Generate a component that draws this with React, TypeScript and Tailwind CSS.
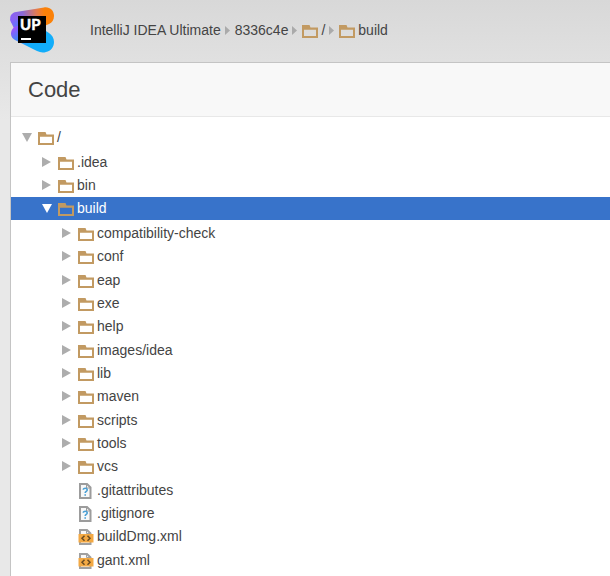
import { useId, useState, type ReactNode } from 'react';

type Kind = 'folder' | 'unknown' | 'xml';

interface Entry {
  name: string;
  kind: Kind;
  children?: Entry[];
}

const folder = (name: string, children: Entry[] = []): Entry => ({ name, kind: 'folder', children });
const file = (name: string, kind: Kind): Entry => ({ name, kind });

const tree: Entry = folder('/', [
  folder('.idea'),
  folder('bin'),
  folder('build', [
    folder('compatibility-check'),
    folder('conf'),
    folder('eap'),
    folder('exe'),
    folder('help'),
    folder('images/idea'),
    folder('lib'),
    folder('maven'),
    folder('scripts'),
    folder('tools'),
    folder('vcs'),
    file('.gitattributes', 'unknown'),
    file('.gitignore', 'unknown'),
    file('buildDmg.xml', 'xml'),
    file('gant.xml', 'xml'),
  ]),
]);

function Logo() {
  const id = useId();
  return (
    <svg viewBox="0 0 44 46" className="h-[46px] w-11 shrink-0" role="img" aria-label="Upsource">
      <defs>
        <linearGradient id={id + 'a'} x1="0" y1="0.4" x2="1" y2="0.3">
          <stop offset="0.02" stopColor="#8a60f8" />
          <stop offset="0.3" stopColor="#8b6ad8" />
          <stop offset="0.62" stopColor="#e27b51" />
          <stop offset="0.8" stopColor="#fb8108" />
        </linearGradient>
        <linearGradient id={id + 'b'} x1="0" y1="0.1" x2="0.8" y2="0.8">
          <stop offset="0.04" stopColor="#a64eff" />
          <stop offset="0.35" stopColor="#4a83fa" />
          <stop offset="0.7" stopColor="#12adfa" />
        </linearGradient>
        <linearGradient id={id + 'c'} x1="0" y1="0" x2="0.6" y2="1">
          <stop offset="0.1" stopColor="#8a60f8" />
          <stop offset="0.7" stopColor="#4f80fb" />
        </linearGradient>
      </defs>
      <path d="M6 5 34 0.4C40 -0.4 44 3.600 44 9c0 4-2 6.500-5 8L8 30 0.500 14C-0.700 9 1.500 5.800 6 5Z" fill={`url(#${id}a)`} />
      <path d="M0.300 12 1 15 5.500 21 13 29V13Z" fill={`url(#${id}c)`} />
      <path d="M7 19C3 20 1 23 1 27c0 3 2 5 4 6l22 11c3 1.500 6 2 9 1 5-1 8-5 8-10 0-4-2-7-5-9L25 17Z" fill={`url(#${id}b)`} />
      <path d="M8 9h28v27H8z" fill="#000" />
      <path d="M11 31h10v2H11z" fill="#fff" />
      <text x="10" y="23" fill="#fff" stroke="#fff" strokeWidth="0.500" fontSize="15" fontWeight="700" fontFamily="Lato, sans-serif">UP</text>
    </svg>
  );
}

function FolderIcon() {
  return (
    <svg viewBox="0 0 16 13" className="h-[13px] w-4 shrink-0" aria-hidden="true">
      <path fillRule="evenodd" d="M0 0h7.500l1 2.500H16V13H0zM2 4.800V11h12V4.800z" fill="#c29a62" />
    </svg>
  );
}

function UnknownIcon() {
  return (
    <svg viewBox="0 0 16 16" className="size-4 shrink-0" aria-hidden="true">
      <path d="M2 1h7L12.500 4.500V15H2z" fill="#f8f8f8" stroke="#9c9c9c" strokeWidth="2" />
      <path d="M8.500 1v4h4" fill="none" stroke="#9c9c9c" />
      <path d="M5.300 6.700C5.300 4.700 9.200 4.600 9.200 6.900c0 1.500-2 1.500-2 3.200M7.200 11.300v1.500" fill="none" stroke="#4a9fd4" strokeWidth="1.600" />
    </svg>
  );
}

function XmlIcon() {
  return (
    <svg viewBox="0 0 16 16" className="size-4 shrink-0" aria-hidden="true">
      <path d="M2 5V1h7L12.500 4.500V5M2 12v3h10.500v-3" fill="#f8f8f8" stroke="#a0a0a0" strokeWidth="2" />
      <path d="M8.500 1v3.500h4" fill="none" stroke="#a0a0a0" />
      <path d="M0.500 5H15.500v8.500H0.500z" fill="#f3a944" />
      <path d="M6.500 6.700 4 9.200l2.500 2.500M9.500 6.700 12 9.200l-2.500 2.500" fill="none" stroke="#6b4c22" strokeWidth="1.500" />
    </svg>
  );
}

function Arrow({ open }: { open: boolean }) {
  return (
    <svg viewBox="0 0 10 10" className="size-2.5" aria-hidden="true">
      <path d={open ? 'M0 1h10L5 10z' : 'M0 0v10l9-5z'} fill="currentColor" />
    </svg>
  );
}

function EntryIcon({ kind }: { kind: Kind }) {
  if (kind === 'unknown') return <UnknownIcon />;
  if (kind === 'xml') return <XmlIcon />;
  return <FolderIcon />;
}

const indents = ['pl-[11px]', 'pl-[31px]', 'pl-[51px]'];

interface NodeProps {
  entry: Entry;
  level: number;
  path: string;
  selected: string;
  onSelect: (path: string) => void;
}

function TreeNode({ entry, level, path, selected, onSelect }: NodeProps) {
  const [open, setOpen] = useState(Boolean(entry.children?.length));
  const active = path === selected;
  const spacing = level === 2 ? 'nth-[3n]:pt-px' : '';
  return (
    <li className={spacing}>
      <div className={`flex h-[23px] items-center pb-0.5 ${indents[level]} ${active ? 'bg-[#3873ca] text-white' : 'text-[#444]'}`}>
        {entry.children ? (
          <button
            type="button"
            aria-expanded={open}
            aria-label={`Toggle ${entry.name}`}
            onClick={() => setOpen(!open)}
            className={`flex w-4 shrink-0 ${active ? 'text-white' : 'text-[#adadad]'}`}
          >
            <Arrow open={open} />
          </button>
        ) : (
          <span className="w-4 shrink-0" />
        )}
        <a
          href={`#${path}`}
          onClick={() => onSelect(path)}
          className="flex items-center gap-[3px] whitespace-nowrap"
        >
          <span className={entry.kind === 'folder' ? 'flex pt-1' : 'flex pt-0.5'}>
            <EntryIcon kind={entry.kind} />
          </span>
          {entry.name}
        </a>
      </div>
      {open && entry.children && entry.children.length > 0 && (
        <ul className="pt-0.5">
          {entry.children.map((child) => (
            <TreeNode
              key={child.name}
              entry={child}
              level={level + 1}
              path={`${path === '/' ? '' : path}/${child.name}`}
              selected={selected}
              onSelect={onSelect}
            />
          ))}
        </ul>
      )}
    </li>
  );
}

function Crumb({ href, icon, children }: { href: string; icon?: boolean; children: ReactNode }) {
  return (
    <li className="group flex items-center">
      <a href={href} className="flex items-center gap-[3px]">
        {icon && (
          <span className="flex pt-0.5">
            <FolderIcon />
          </span>
        )}
        {children}
      </a>
      <svg viewBox="0 0 5 9" className="mr-[5px] ml-1 h-[9px] w-[5px] group-last:hidden" aria-hidden="true">
        <path d="M0 0v9l5-4.500z" fill="#aaa" />
      </svg>
    </li>
  );
}

export default function App() {
  const [selected, setSelected] = useState('/build');
  return (
    <div className="flex min-h-screen flex-col bg-[#e8e8e8] bg-[linear-gradient(#d8d8d8,#e8e8e8_120px)] pl-2.5 font-['Liberation_Sans',Arial,sans-serif] text-sm text-[#444]">
      <header className="flex h-[62px] items-start pt-[7px]">
        <a href="#home">
          <Logo />
        </a>
        <nav aria-label="Breadcrumb" className="flex h-[46px] items-center pl-9">
          <ol className="flex items-center whitespace-nowrap">
            <Crumb href="#project">IntelliJ IDEA Ultimate</Crumb>
            <Crumb href="#revision">8336c4e</Crumb>
            <Crumb href="#root" icon>/</Crumb>
            <Crumb href="#build" icon>build</Crumb>
          </ol>
        </nav>
      </header>
      <main className="flex-1 border-t border-l border-[#c4c4c4] bg-white">
        <h1 className="border-b border-[#e8e8e8] bg-[#f8f8f8] px-[17px] py-3 text-[22px] leading-[29px]">Code</h1>
        <ul className="pt-[9px]">
          <TreeNode entry={tree} level={0} path="/" selected={selected} onSelect={setSelected} />
        </ul>
      </main>
    </div>
  );
}
